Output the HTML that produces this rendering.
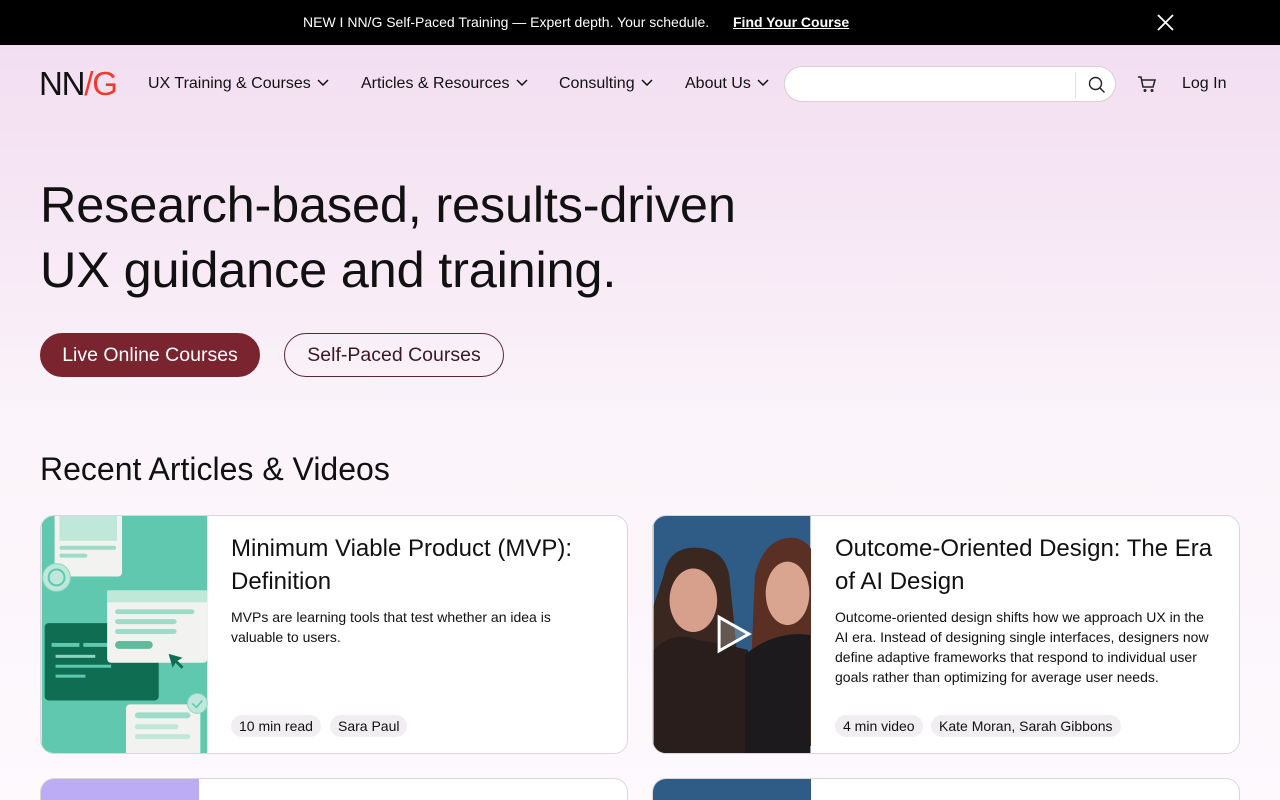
<!DOCTYPE html>
<html style="width:1280px;height:800px;overflow:hidden;background:#fdf9fd"><head><meta charset="utf-8"><style>
*{box-sizing:border-box;margin:0;padding:0}
body{width:1280px;height:800px;overflow:hidden;font-family:"Liberation Sans",Arial,sans-serif;color:#111;
background:linear-gradient(180deg,#f1dcf0 0px,#f6e6f4 200px,#fbf4fa 420px,#fdf9fd 800px);position:relative}
.top{height:45px;background:#000;color:#fff;font-size:14px;position:relative}
.top .t{position:absolute;left:303px;top:14px;white-space:nowrap}
.top b{position:absolute;left:733px;top:14px;text-decoration:underline;font-weight:bold;white-space:nowrap}
.top .x{position:absolute;left:1157px;top:14px}
.nav{position:absolute;top:66px;left:0;width:1280px;height:36px}
.logo{position:absolute;left:39px;top:4px;font-size:33px;letter-spacing:-1.2px;line-height:28px}
.logo span{color:#ee3b2c}
.ni{position:absolute;top:9px;font-size:16px;color:#111}
.ni svg{margin-left:6px;vertical-align:2px}
.search{position:absolute;left:784px;top:0;width:332px;height:36px;border:1px solid #d6cfd6;border-radius:18px;background:#fff}
.search .sep{position:absolute;left:290px;top:5px;width:1px;height:26px;background:#ddd}
h1{position:absolute;left:40px;top:172px;font-size:50.5px;font-weight:normal;line-height:65px;letter-spacing:-0.2px}
.btn{position:absolute;top:333px;height:44px;border-radius:22px;font-size:19.5px;line-height:42px;text-align:center}
h2{position:absolute;left:40px;top:451px;font-size:32px;font-weight:normal}
.card{position:absolute;width:588px;height:239px;background:#fff;border:1px solid #dcd6dc;border-radius:14px;overflow:hidden}
.card .img{position:absolute;left:0;top:0;height:100%}
.card h3{position:absolute;font-size:24px;font-weight:normal;line-height:33px}
.card p{position:absolute;font-size:14px;line-height:20px}
.tag{position:absolute;top:199px;height:22px;background:#f1eef1;border-radius:11px;font-size:14px;line-height:22px;padding:0 8px}
</style></head><body>
<div class="top"><span class="t">NEW I NN/G Self-Paced Training — Expert depth. Your schedule.</span><b>Find Your Course</b>
<svg class="x" width="17" height="17" viewBox="0 0 17 17"><path d="M1 1L16 16M16 1L1 16" stroke="#fff" stroke-width="1.8"/></svg></div>
<div class="nav">
<div class="logo">NN<span>/G</span></div>
<div class="ni" style="left:148px">UX Training &amp; Courses<svg width="12" height="7"><path d="M1 1l5 5 5-5" stroke="#111" stroke-width="1.5" fill="none"/></svg></div>
<div class="ni" style="left:361px">Articles &amp; Resources<svg width="12" height="7"><path d="M1 1l5 5 5-5" stroke="#111" stroke-width="1.5" fill="none"/></svg></div>
<div class="ni" style="left:559px">Consulting<svg width="12" height="7"><path d="M1 1l5 5 5-5" stroke="#111" stroke-width="1.5" fill="none"/></svg></div>
<div class="ni" style="left:685px">About Us<svg width="12" height="7"><path d="M1 1l5 5 5-5" stroke="#111" stroke-width="1.5" fill="none"/></svg></div>
<div class="search"><div class="sep"></div>
<svg style="position:absolute;left:303px;top:9px" width="18" height="18" viewBox="0 0 18 18"><circle cx="7.5" cy="7.5" r="6" stroke="#222" stroke-width="1.4" fill="none"/><path d="M12 12l4.5 4.5" stroke="#222" stroke-width="1.4"/></svg></div>
<svg style="position:absolute;left:1137px;top:10px" width="19" height="17" viewBox="0 0 19 17"><path d="M1 1h3l2 10h10l2-7H5" stroke="#222" stroke-width="1.5" fill="none"/><circle cx="8" cy="14.5" r="1.5" fill="#222"/><circle cx="15" cy="14.5" r="1.5" fill="#222"/></svg>
<div class="ni" style="left:1182px">Log In</div>
</div>
<h1>Research-based, results-driven<br>UX guidance and training.</h1>
<div class="btn" style="left:40px;width:220px;background:#7a2430;color:#fff;border:1px solid #7a2430">Live Online Courses</div>
<div class="btn" style="left:284px;width:220px;border:1px solid #5a2630;color:#3a1a20">Self-Paced Courses</div>
<h2>Recent Articles &amp; Videos</h2>

<div class="card" style="left:40px;top:515px">
<svg class="img" width="167" height="239" viewBox="0 0 167 239">
<rect width="167" height="239" fill="#5fc8ae"/>
<rect x="13" y="-5" width="68" height="66" rx="4" fill="#f2f2f0"/><rect x="18" y="0" width="58" height="25" fill="#bfe8da"/><rect x="18" y="30" width="57" height="4" rx="2" fill="#9ddcc9"/><rect x="18" y="38" width="28" height="4" rx="2" fill="#9ddcc9"/>
<circle cx="15" cy="62" r="14" fill="#bfe8da" stroke="#8fd6c2"/><circle cx="15" cy="62" r="8" fill="none" stroke="#5fc8ae" stroke-width="2"/>
<rect x="3" y="108" width="115" height="78" rx="4" fill="#0f6e52"/>
<rect x="10" y="128" width="28" height="4" fill="#5fc8ae"/><rect x="42" y="128" width="30" height="4" fill="#5fc8ae"/><rect x="14" y="140" width="40" height="3" fill="#8fd6c2"/><rect x="14" y="150" width="56" height="3" fill="#5fc8ae"/><rect x="14" y="160" width="30" height="3" fill="#5fc8ae"/>
<rect x="66" y="75" width="101" height="73" rx="4" fill="#f2f2f0"/><rect x="66" y="75" width="101" height="12" fill="#bfe8da"/>
<rect x="74" y="94" width="80" height="5" rx="2.5" fill="#9ddcc9"/><rect x="74" y="104" width="62" height="5" rx="2.5" fill="#9ddcc9"/><rect x="74" y="114" width="62" height="5" rx="2.5" fill="#9ddcc9"/><rect x="74" y="126" width="38" height="8" rx="4" fill="#5fbb9e"/>
<path d="M128 139l14 4-5 3 6 6-2 2-6-6-3 5z" fill="#0f6e52"/>
<rect x="85" y="190" width="75" height="55" rx="4" fill="#f2f2f0"/><rect x="94" y="198" width="56" height="6" rx="3" fill="#9ddcc9"/><rect x="94" y="210" width="44" height="5" rx="2.5" fill="#bfe8da"/><rect x="94" y="220" width="56" height="5" rx="2.5" fill="#bfe8da"/>
<circle cx="157" cy="189" r="10" fill="#bfe8da" stroke="#8fd6c2"/><path d="M152 189l4 4 6-7" stroke="#5fc8ae" stroke-width="1.6" fill="none"/>
</svg>
<h3 style="left:190px;top:16px">Minimum Viable Product (MVP):<br>Definition</h3>
<p style="left:190px;top:91px;width:360px">MVPs are learning tools that test whether an idea is valuable to users.</p>
<div class="tag" style="left:190px">10 min read</div><div class="tag" style="left:289px">Sara Paul</div>
</div>

<div class="card" style="left:652px;top:515px">
<svg class="img" width="158" height="239" viewBox="0 0 158 239">
<rect width="158" height="239" fill="#2f5c86"/>
<path d="M10 60q5-30 35-28q30 2 32 35l8 80l15 92H0V90z" fill="#3a2820"/>
<ellipse cx="40" cy="85" rx="24" ry="32" fill="#d7a08c"/>
<path d="M0 135q20-20 45-10q30 5 50 10l5 104H0z" fill="#2a1e1c"/>
<path d="M102 60q10-40 40-38q25 5 20 40l-2 170H95z" fill="#5a3024"/>
<ellipse cx="135" cy="78" rx="22" ry="32" fill="#d9a591"/>
<path d="M92 140q30-25 66-20v119H92z" fill="#1c1a1c"/>
<path d="M66 102l30 17-30 17z" fill="rgba(200,200,200,.3)" stroke="#fff" stroke-width="3"/>
</svg>
<h3 style="left:182px;top:16px;width:390px">Outcome-Oriented Design: The Era of AI Design</h3>
<p style="left:182px;top:91px;width:385px">Outcome-oriented design shifts how we approach UX in the AI era. Instead of designing single interfaces, designers now define adaptive frameworks that respond to individual user goals rather than optimizing for average user needs.</p>
<div class="tag" style="left:182px">4 min video</div><div class="tag" style="left:278px">Kate Moran, Sarah Gibbons</div>
</div>

<div class="card" style="left:40px;top:778px;height:22px;border-bottom:none;border-radius:14px 14px 0 0"><div style="position:absolute;left:0;top:0;width:158px;height:22px;background:#bcacf5"></div></div>
<div class="card" style="left:652px;top:778px;height:22px;border-bottom:none;border-radius:14px 14px 0 0"><div style="position:absolute;left:0;top:0;width:158px;height:22px;background:#2f5c86"></div></div>
</body></html>
